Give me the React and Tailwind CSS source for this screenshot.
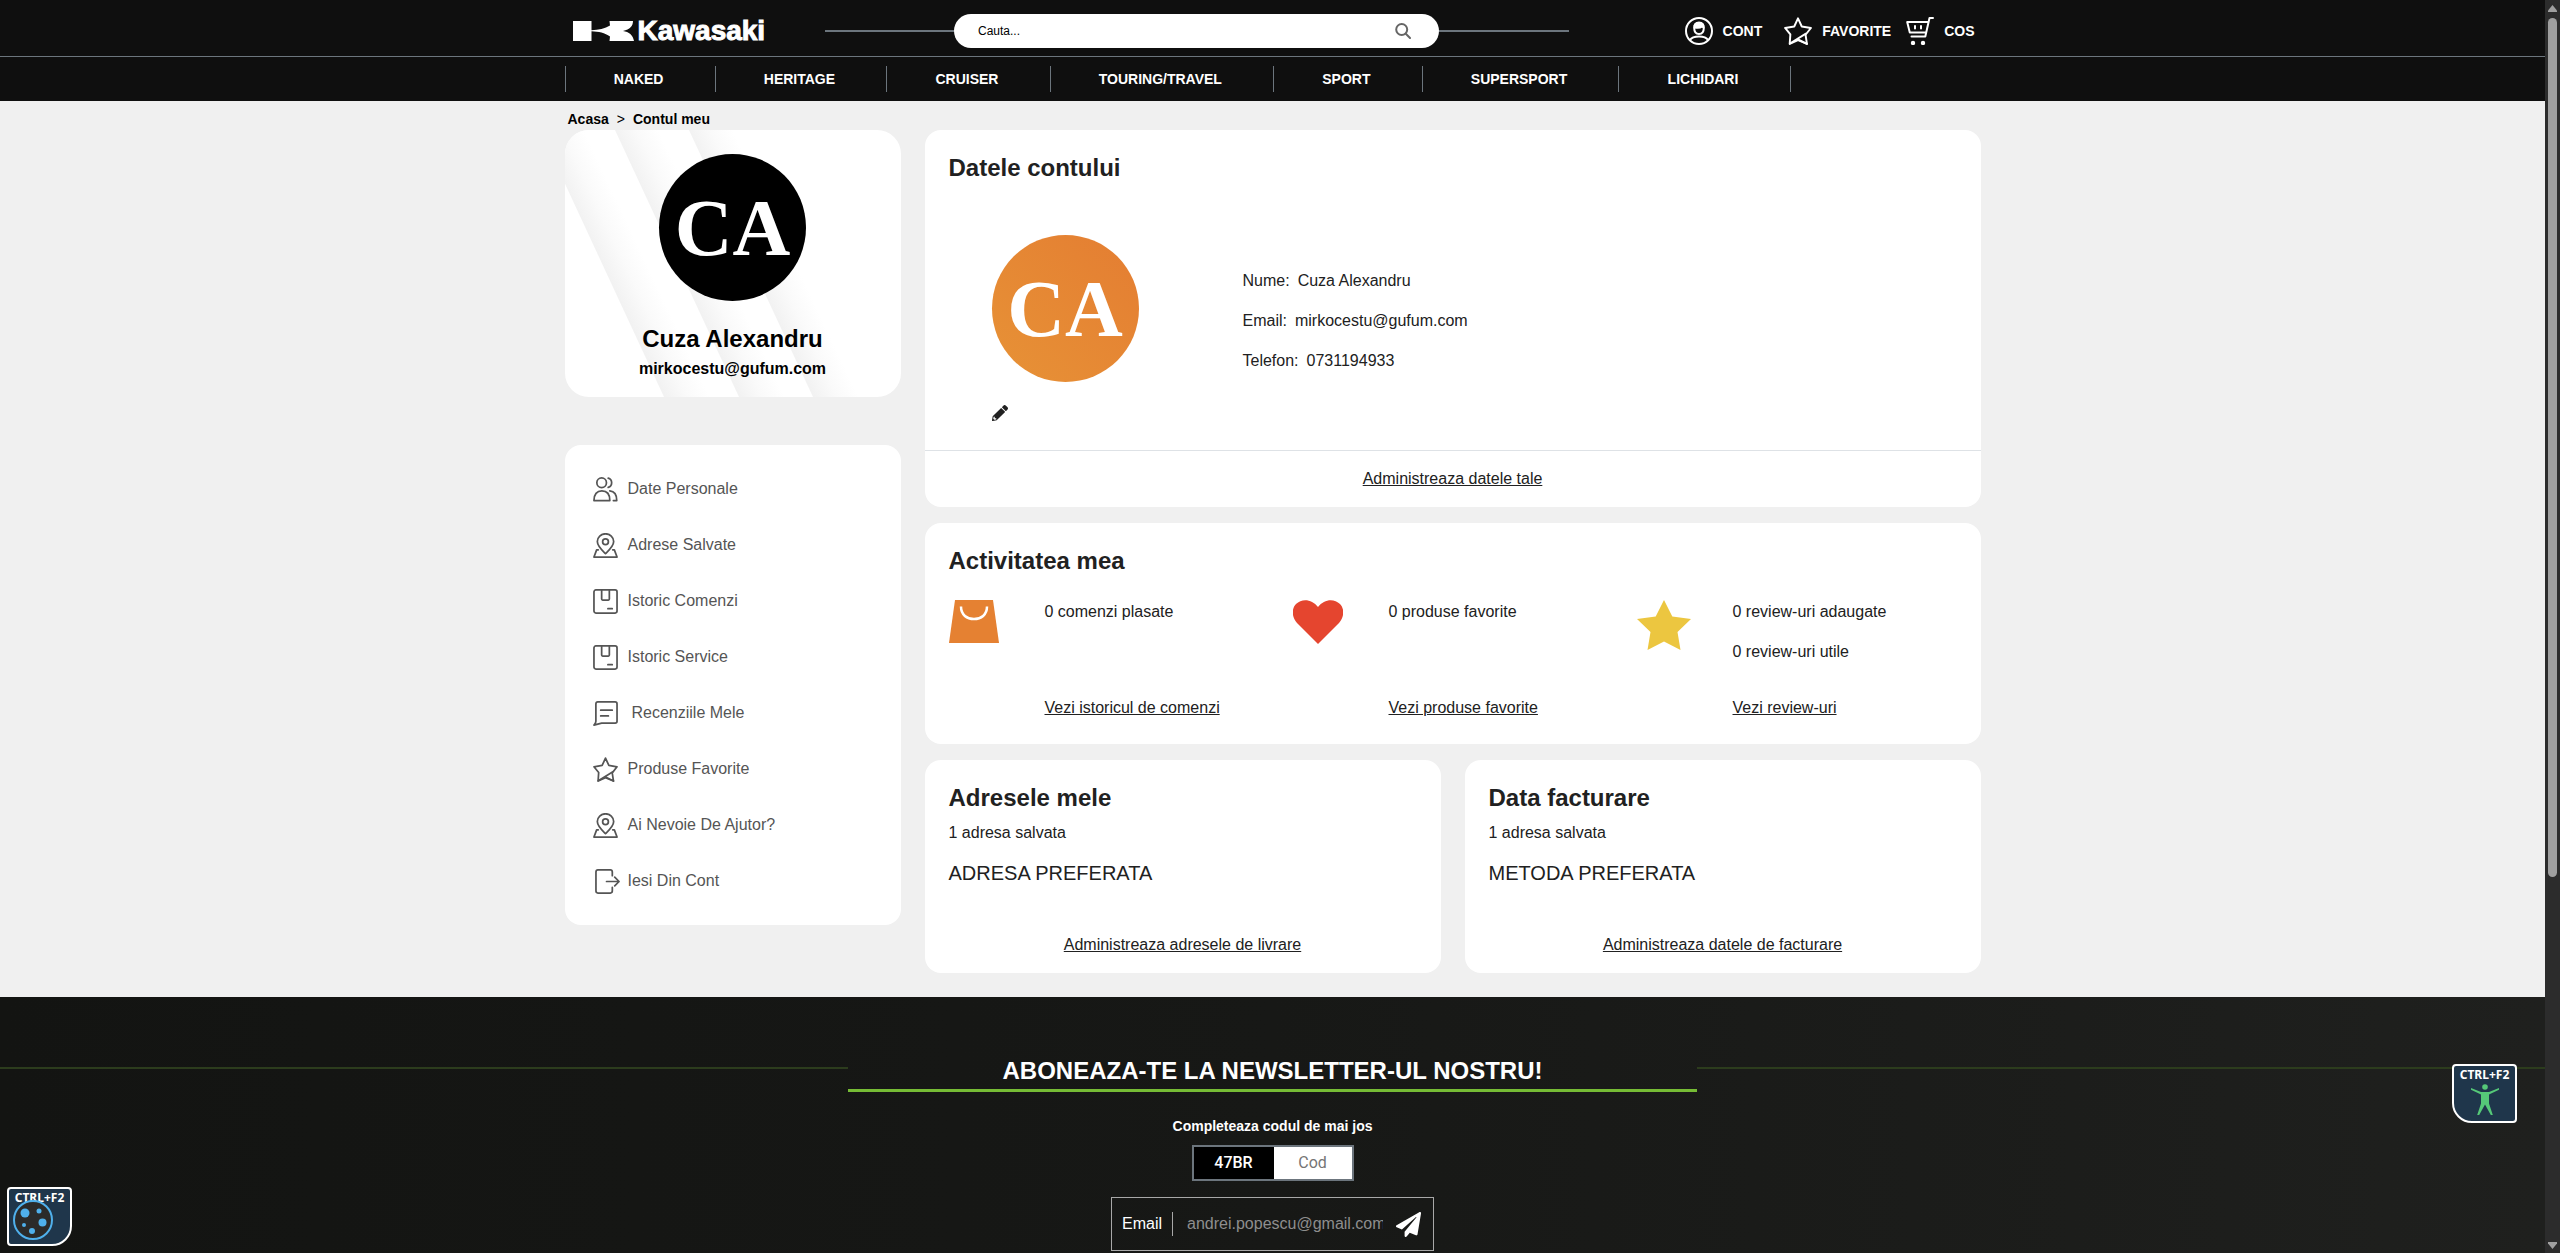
import React from "react";

const outline = {
  fill: "none",
  stroke: "currentColor",
  strokeWidth: 1.8,
  strokeLinecap: "round",
  strokeLinejoin: "round",
  "aria-hidden": true,
};

function KawasakiMark() {
  return (
    <svg viewBox="0 0 61 20" className="h-5 w-[61px]" fill="#fff" aria-hidden="true">
      <path d="M0 0h18.500v9.200c7-.2 13.500-1.600 18.500-4.700L36.500 0H60c0 5-3 8.600-10 10 6 .7 10 4 11 10H36.500l.5-4.500c-5-3.600-11.500-4.900-18.500-5.200V20H0z" />
    </svg>
  );
}

function AccountIcon() {
  return (
    <svg viewBox="0 0 28 28" className="size-7" {...outline} strokeWidth={2}>
      <circle cx="14" cy="14" r="13" />
      <path d="M9.200 11c0-3.500 1.800-5.500 4.800-5.500s4.800 2 4.800 5.500-1.800 6-4.800 6-4.800-2.500-4.800-6z" />
      <path d="M9.500 10.500c3 .6 6 .3 7.500-1l1.500 1C18.500 7.500 17 6 14 6s-5 1.500-4.500 4.500z" fill="#fff" />
      <path d="M5 23c1.500-2.500 5-3.500 9-3.500s7.500 1 9 3.500" />
    </svg>
  );
}

function StarIcon({ className, strokeWidth }) {
  return (
    <svg viewBox="0 0 26 26" className={className} {...outline} strokeWidth={strokeWidth}>
      <path d="M13 1.200l3.500 7.600 8.500 1.400-5 6.300 1.300 8.500-8.300-3.500-7.700 3.500.6-8.800L1 10.200l8.500-1.400z" />
      <path d="M20.300 15.500L5.500 24.600M13 20.800l8.300 4.200" />
    </svg>
  );
}

function CartIcon() {
  return (
    <svg viewBox="0 0 28 28" className="size-7" {...outline} strokeWidth={2}>
      <path d="M27 1h-3.500l-4.200 18.500H5.500M22.300 5H1.200l2.600 10.500H20M9 9v2.500M15 9v2.500" />
      <circle cx="7" cy="26" r="1.200" fill="#fff" />
      <circle cx="17" cy="26" r="1.200" fill="#fff" />
    </svg>
  );
}

function SearchIcon() {
  return (
    <svg viewBox="0 0 16 16" className="size-4" {...outline} strokeWidth={2}>
      <circle cx="6.700" cy="6.500" r="5.500" />
      <path d="M10.800 10.800L15 15" />
    </svg>
  );
}

function PeopleIcon() {
  return (
    <svg viewBox="0 0 26 26" className="size-[25px]" {...outline}>
      <circle cx="9" cy="6" r="5" />
      <path d="M1 24.500C1 18 4 14.500 9.200 14.500S17.500 18 17.500 24.500zM15.800 1.200a5 5 0 0 1 0 9.600M17.500 14.500c4.500.4 7.200 4 7.200 10h-3.500" />
    </svg>
  );
}

function PinIcon() {
  return (
    <svg viewBox="0 0 26 26" className="size-[25px]" {...outline}>
      <path d="M13 21.500C9.500 18 4.500 13.500 4.500 8.800a8.500 8 0 0 1 17 0c0 4.700-5 9.200-8.500 12.700z" />
      <circle cx="13" cy="9" r="3" />
      <path d="M5.500 17.500H3.800L1 25h24l-2.800-7.500h-1.700" />
    </svg>
  );
}

function BoxIcon() {
  return (
    <svg viewBox="0 0 26 26" className="size-[25px]" {...outline}>
      <rect x="1" y="1" width="24" height="24" rx="2" />
      <path d="M9 1v9.500q0 1 1 1h6q1 0 1-1V1M15.500 20.500h4.500" />
    </svg>
  );
}

function ReviewIcon() {
  return (
    <svg viewBox="0 0 26 26" className="size-[25px]" {...outline}>
      <path d="M3 3q0-2 2-2h18q2 0 2 2v18q0 2-2 2H9l-8 2q2-2 2-4zM8 9.500h12M8 15.500h8" />
    </svg>
  );
}

function ExitIcon() {
  return (
    <svg viewBox="0 0 26 26" className="size-[25px]" {...outline}>
      <path d="M18 7V3q0-2-2-2H3Q1 1 1 3v20q0 2 2 2h13q2 0 2-2v-4M12 13h13M20.500 8.500L25 13l-4.500 4.500" />
    </svg>
  );
}

function PencilIcon() {
  return (
    <svg viewBox="0 0 512 512" className="size-4" fill="currentColor" aria-hidden="true">
      <path d="M498 142l-46 46c-5 5-12 5-17 0L324 77c-5-5-5-12 0-17l46-46c19-19 49-19 68 0l60 60c19 19 19 49 0 68zm-214-42L22 362 0 484c-3 17 11 31 28 28l122-22 262-262c5-5 5-12 0-17L301 100c-5-5-12-5-17 0z" />
      <path d="M88 424h48v36l-64 12-32-31 12-65h36z" fill="#fff" />
    </svg>
  );
}

function PlaneIcon() {
  return (
    <svg viewBox="0 0 512 512" className="size-[25px]" fill="#fff" aria-hidden="true">
      <path d="M476 3L12 271c-18 10-16 36 2 43l107 44L409 104c5-5 13 3 8 8L176 406v80c0 24 28 33 42 16l64-78 126 53c14 6 31-3 33-19l72-432c3-20-19-35-37-23z" />
    </svg>
  );
}

function BagIcon() {
  return (
    <svg viewBox="0 0 50 43" className="h-[43px] w-[50px]" aria-hidden="true">
      <path d="M6 0h38l6 43H0z" fill="#e58132" />
      <path d="M12 6.500c0 8.500 6 12.500 13 12.500s13-4 13-12.500" fill="none" stroke="#fff" strokeWidth="2.500" />
    </svg>
  );
}

function HeartIcon() {
  return (
    <svg viewBox="0 0 50 44" className="h-11 w-[50px]" aria-hidden="true">
      <path d="M25 44L4 23C-2 16-1 8 3 4c6-6 16-5 22 3 6-8 16-9 22-3 4 4 5 12-1 19z" fill="#e5452f" />
    </svg>
  );
}

function GoldStarIcon() {
  return (
    <svg viewBox="0 0 54 50" className="h-[50px] w-[54px]" aria-hidden="true">
      <path d="M27 0l8.300 16.500L54 19 40.500 32 43.500 50 27 41.500 10.500 50l3-18L0 19l18.700-2.500z" fill="#ecc640" />
    </svg>
  );
}

const categories = ["NAKED", "HERITAGE", "CRUISER", "TOURING/TRAVEL", "SPORT", "SUPERSPORT", "LICHIDARI"];

const menu = [
  { label: "Date Personale", icon: <PeopleIcon /> },
  { label: "Adrese Salvate", icon: <PinIcon /> },
  { label: "Istoric Comenzi", icon: <BoxIcon /> },
  { label: "Istoric Service", icon: <BoxIcon /> },
  { label: "Recenziile Mele", icon: <ReviewIcon />, wide: true },
  { label: "Produse Favorite", icon: <StarIcon className="size-[25px]" strokeWidth={1.8} /> },
  { label: "Ai Nevoie De Ajutor?", icon: <PinIcon /> },
  { label: "Iesi Din Cont", icon: <ExitIcon />, shifted: true },
];

const activity = [
  { icon: <BagIcon />, lines: ["0 comenzi plasate"], link: "Vezi istoricul de comenzi" },
  { icon: <HeartIcon />, lines: ["0 produse favorite"], link: "Vezi produse favorite" },
  { icon: <GoldStarIcon />, lines: ["0 review-uri adaugate", "0 review-uri utile"], link: "Vezi review-uri" },
];

const addresses = [
  { title: "Adresele mele", kind: "ADRESA PREFERATA", link: "Administreaza adresele de livrare" },
  { title: "Data facturare", kind: "METODA PREFERATA", link: "Administreaza datele de facturare" },
];

function Avatar({ className }) {
  return (
    <div
      className={
        "flex size-[147px] items-center justify-center rounded-full font-['Liberation_Serif',serif] text-[80px] leading-none font-bold text-white " +
        className
      }
    >
      CA
    </div>
  );
}

function Header() {
  return (
    <header className="bg-[#0f0f0f] text-sm font-bold text-white">
      <div className="border-b border-[#6c757d]">
        <div className="mx-auto flex h-14 w-full max-w-[1416px] items-center pt-1.5 pr-1.5 pl-2">
          <a href="#" aria-label="Kawasaki" className="flex w-[252px] items-center gap-1">
            <KawasakiMark />
            <span className="text-[28px] leading-5 [-webkit-text-stroke:1px_#fff]">Kawasaki</span>
          </a>
          <form className="flex w-[744px] items-center">
            <span className="h-0.5 flex-1 bg-[#6c757d]" />
            <div className="flex h-[34px] w-[485px] items-center rounded-full bg-white pr-7 pl-6">
              <input
                aria-label="Cauta"
                placeholder="Cauta..."
                className="flex-1 text-xs font-normal text-black outline-none placeholder:text-black"
              />
              <button type="button" aria-label="Cauta" className="text-[#666]">
                <SearchIcon />
              </button>
            </div>
            <span className="h-0.5 flex-1 bg-[#6c757d]" />
          </form>
          <div className="ml-auto flex items-center">
            <a href="#" className="mr-[22px] flex items-center gap-2.5">
              <AccountIcon />
              CONT
            </a>
            <a href="#" className="mr-[15px] flex items-center gap-2.5">
              <StarIcon className="size-7" strokeWidth={1.8} />
              FAVORITE
            </a>
            <a href="#" className="flex items-center gap-2.5">
              <CartIcon />
              COS
            </a>
          </div>
        </div>
      </div>
      <nav className="mx-auto flex h-11 w-full max-w-[1416px] items-center">
        <div className="flex w-[1226px] border-l border-[#6c757d]">
          {categories.map((name) => (
            <a
              key={name}
              href="#"
              className="flex-auto border-r border-[#6c757d] pr-[51px] pl-12 text-center leading-[26px]"
            >
              {name}
            </a>
          ))}
        </div>
      </nav>
    </header>
  );
}

function ProfileCard() {
  return (
    <section className="relative flex h-[267px] flex-col items-center overflow-hidden rounded-3xl bg-white pt-6 text-black">
      <svg
        viewBox="0 0 336 267"
        preserveAspectRatio="none"
        className="absolute inset-0 size-full"
        aria-hidden="true"
      >
        <defs>
          <linearGradient id="fold" gradientUnits="userSpaceOnUse" x1="0" y1="54" x2="36" y2="37">
            <stop offset="0" stopColor="#f2f2f2" />
            <stop offset="0.5" stopColor="#fafafa" />
            <stop offset="1" stopColor="#fff" />
          </linearGradient>
        </defs>
        {[0, 75, 149].map((x) => (
          <path key={x} transform={`translate(${x} 0)`} d="M-25 0L99 267H160L36 0z" fill="url(#fold)" />
        ))}
      </svg>
      <Avatar className="relative bg-black" />
      <h2 className="relative mt-5 text-2xl leading-9 font-bold">Cuza Alexandru</h2>
      <p className="relative text-base leading-6 font-bold">mirkocestu@gufum.com</p>
    </section>
  );
}

function SideMenu() {
  return (
    <nav className="mt-12 rounded-2xl bg-white px-7 py-4">
      {menu.map((item) => (
        <a key={item.label} href="#" className="flex h-14 items-center text-[#555]">
          <span className={item.shifted ? "pr-1.5 pl-0.5" : "pr-2"}>{item.icon}</span>
          <span className={item.wide ? "pl-1.5" : "pl-0.5"}>{item.label}</span>
        </a>
      ))}
    </nav>
  );
}

function AccountCard() {
  return (
    <section className="rounded-2xl bg-white">
      <div className="px-6 pt-5 pb-[29px]">
        <h2 className="text-2xl leading-9 font-bold">Datele contului</h2>
        <div className="mt-[49px] flex">
          <div className="w-[294px] pl-[43px]">
            <Avatar className="bg-linear-to-tr from-[#e79236] to-[#e47d32]" />
            <button type="button" aria-label="Modifica poza" className="mt-[23px] block">
              <PencilIcon />
            </button>
          </div>
          <dl className="mt-[34px] flex flex-col gap-4">
            <div className="flex gap-2">
              <dt>Nume:</dt>
              <dd>Cuza Alexandru</dd>
            </div>
            <div className="flex gap-2">
              <dt>Email:</dt>
              <dd>mirkocestu@gufum.com</dd>
            </div>
            <div className="flex gap-2">
              <dt>Telefon:</dt>
              <dd>0731194933</dd>
            </div>
          </dl>
        </div>
      </div>
      <div className="border-t border-[#dee2e6] py-4 text-center">
        <a href="#" className="underline">
          Administreaza datele tale
        </a>
      </div>
    </section>
  );
}

function ActivityCard() {
  return (
    <section className="rounded-2xl bg-white px-6 pt-5 pb-6">
      <h2 className="text-2xl leading-9 font-bold">Activitatea mea</h2>
      <div className="mt-[21px] grid grid-cols-3 gap-6">
        {activity.map((item) => (
          <div key={item.link} className="flex h-[120px]">
            <div className="w-24">{item.icon}</div>
            <div className="flex flex-1 flex-col gap-4">
              {item.lines.map((line) => (
                <p key={line}>{line}</p>
              ))}
              <a href="#" className="mt-auto underline">
                {item.link}
              </a>
            </div>
          </div>
        ))}
      </div>
    </section>
  );
}

function Footer() {
  return (
    <footer className="flex-1 bg-linear-to-r from-[#131412] via-[#171816] to-[#1f201e] pt-12 text-white">
      <div className="grid grid-cols-3">
        <span className="mt-[22px] h-0.5 bg-[#2c3c1d]" />
        <h2 className="border-b-3 border-[#76bc35] pt-2 text-center text-2xl leading-9 font-bold">
          ABONEAZA-TE LA NEWSLETTER-UL NOSTRU!
        </h2>
        <span className="mt-[22px] h-0.5 bg-[#2c3c1d]" />
      </div>
      <form className="flex flex-col items-center">
        <label htmlFor="code" className="mt-6 text-sm leading-5 font-bold">
          Completeaza codul de mai jos
        </label>
        <div className="mt-[9px] flex h-9 w-[162px] border-2 border-[#6c757d]">
          <span className="flex flex-1 items-center justify-center bg-black font-['Roboto',sans-serif] font-medium">47BR</span>
          <input
            id="code"
            placeholder="Cod"
            className="w-[78px] bg-white text-center font-['Roboto',sans-serif] text-black outline-none placeholder:text-[#757575]"
          />
        </div>
        <div className="mt-4 flex h-[54px] w-[323px] items-center border border-[#a8a8a8] pr-3 pl-2.5">
          <label htmlFor="email" className="border-r border-[#a8a8a8] pr-2.5">
            Email
          </label>
          <input
            id="email"
            placeholder="andrei.popescu@gmail.com"
            className="ml-3.5 w-[196px] outline-none placeholder:text-[#8e8e8e]"
          />
          <button type="button" aria-label="Trimite" className="ml-auto">
            <PlaneIcon />
          </button>
        </div>
      </form>
    </footer>
  );
}

function AccessibilityBadge() {
  return (
    <button
      type="button"
      className="absolute right-7 bottom-[130px] flex h-[59px] w-[65px] flex-col items-center rounded-sm rounded-bl-[20px] border-2 border-white bg-[#1f364b] font-['Noto_Sans',sans-serif] text-xs leading-[18px] font-bold text-white"
    >
      CTRL+F2
      <svg viewBox="0 0 28 32" className="h-8 w-7" fill="#55c878" aria-hidden="true">
        <circle cx="14" cy="3" r="2.800" />
        <path d="M0 4l10 4h8L28 4v1.800l-10 4.700v9L21.800 31h-2L14 20.500 8.200 31h-2L10 19.500v-9L0 5.800z" />
      </svg>
    </button>
  );
}

function CookieBadge() {
  return (
    <button
      type="button"
      className="absolute bottom-[7px] left-[7px] flex h-[59px] w-[65px] flex-col items-center rounded-sm rounded-br-[20px] border-2 border-white bg-[#1f364b] font-['Noto_Sans',sans-serif] text-xs leading-[18px] font-bold text-white"
    >
      CTRL+F2
      <svg viewBox="0 0 40 40" className="absolute bottom-1 left-1 size-10" aria-hidden="true">
        <circle cx="20" cy="20" r="19" fill="#2b2b2b" stroke="#4fb0ec" strokeWidth="2" />
        <g fill="#4fb0ec">
          <circle cx="12" cy="13" r="4.500" />
          <circle cx="26" cy="11" r="2.500" />
          <circle cx="29.500" cy="22.500" r="4" />
          <circle cx="11" cy="25" r="2" />
          <circle cx="19" cy="31" r="3" />
        </g>
      </svg>
    </button>
  );
}

function ScrollRail() {
  return (
    <div className="flex w-[15px] flex-col items-center bg-[#2c2c2c] pt-[5px] pb-1" aria-hidden="true">
      <svg viewBox="0 0 9 7" className="h-[7px] w-[9px]" fill="#9f9f9f">
        <path d="M4.500 0L9 5.500V7H0V5.500z" />
      </svg>
      <div className="mt-1.5 mb-[365px] w-[9px] flex-1 rounded-full bg-[#9f9f9f]" />
      <svg viewBox="0 0 9 7" className="h-[7px] w-[9px]" fill="#9f9f9f">
        <path d="M4.500 7L9 1.500V0H0v1.500z" />
      </svg>
    </div>
  );
}

export default function App() {
  return (
    <div className="flex h-screen overflow-hidden font-['Liberation_Sans',Arial,sans-serif] text-base text-[#212121]">
      <div className="relative flex min-w-0 flex-1 flex-col bg-[#f0f0f0]">
        <Header />
        <main className="mx-auto w-full max-w-[1416px] pb-6">
          <div className="flex gap-2 px-[3px] pt-2 text-sm leading-[21px] font-bold text-black">
            <a href="#">Acasa</a>
            <span className="font-normal">&gt;</span>
            <a href="#">Contul meu</a>
          </div>
          <div className="flex items-start gap-6">
            <aside className="w-[336px]">
              <ProfileCard />
              <SideMenu />
            </aside>
            <div className="flex flex-1 flex-col gap-4">
              <AccountCard />
              <ActivityCard />
              <div className="grid grid-cols-2 gap-6">
                {addresses.map((item) => (
                  <section key={item.title} className="rounded-2xl bg-white px-6 pt-5 pb-4">
                    <h2 className="text-2xl leading-9 font-bold">{item.title}</h2>
                    <p className="mt-[5px]">1 adresa salvata</p>
                    <p className="mt-3 text-xl leading-8">{item.kind}</p>
                    <a href="#" className="mt-11 block text-center underline">
                      {item.link}
                    </a>
                  </section>
                ))}
              </div>
            </div>
          </div>
        </main>
        <Footer />
        <AccessibilityBadge />
        <CookieBadge />
      </div>
      <ScrollRail />
    </div>
  );
}
